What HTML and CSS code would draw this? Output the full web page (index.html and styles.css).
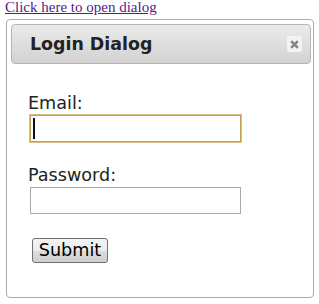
FILE: index.html
```html
<!DOCTYPE html>
<html>
<head>
<meta charset="utf-8">
<link rel="stylesheet" href="styles.css">
</head>
<body>
<a class="open-link" href="#">Click here to open dialog</a>
<div class="dialog">
  <div class="titlebar">
    <span class="title">Login Dialog</span>
    <span class="close">
      <svg width="9" height="9" viewBox="0 0 9 9"><path d="M1.2 1.2 L7.8 7.8 M7.8 1.2 L1.2 7.8" stroke="#858585" stroke-width="2.6" stroke-linecap="butt"/></svg>
    </span>
  </div>
  <form class="content">
    <label class="label">Email:</label>
    <span class="field focused"><input class="input email" type="text"></span>
    <label class="label pw">Password:</label>
    <span class="field"><input class="input" type="password"></span>
    <button class="submit" type="button">Submit</button>
  </form>
</div>
</body>
</html>
```
FILE: styles.css
```css
html, body {
  margin: 0;
  padding: 0;
  background: #fff;
}
body {
  width: 319px;
  height: 304px;
  overflow: hidden;
}
.open-link {
  display: block;
  margin: 0 0 0 5px;
  font-family: "Liberation Serif", serif;
  font-size: 15px;
  line-height: 14px;
  height: 14px;
  color: #551a8b;
  text-decoration: underline;
  width: max-content;
}
.dialog {
  box-sizing: border-box;
  margin: 5px 0 0 6px;
  width: 308px;
  height: 279px;
  border: 1px solid #ababab;
  border-radius: 4px;
  padding: 4px 2px 4px 4px;
  font-family: "DejaVu Sans", Verdana, sans-serif;
  font-size: 17.6px;
  color: #222;
  background: #fff;
}
.titlebar {
  box-sizing: border-box;
  width: 300px;
  height: 40px;
  border: 1px solid #b4b4b4;
  border-radius: 4px;
  background: linear-gradient(#ebebeb, #d2d2d2);
  display: flex;
  align-items: center;
  justify-content: space-between;
  padding: 0 8px 0 18px;
}
.title {
  font-weight: bold;
  font-size: 17.4px;
  line-height: 20px;
  color: #222;
}
.close {
  width: 15px;
  height: 16px;
  border-radius: 2px;
  background: #f3f3f3;
  display: flex;
  align-items: center;
  justify-content: center;
}
.content {
  display: flex;
  flex-direction: column;
  align-items: flex-start;
  padding: 29px 0 0 17px;
  margin: 0;
}
.label {
  display: block;
  line-height: 20px;
  height: 20px;
  color: #222;
}
.pw {
  margin-top: 23px;
}
.field {
  display: block;
  position: relative;
  margin: 2px 0 0 2px;
  height: 27px;
}
.input {
  box-sizing: border-box;
  display: block;
  width: 211px;
  height: 27px;
  margin: 0;
  border: 1px solid #a9a9a9;
  background: #fff;
  padding: 0 4px;
  font: inherit;
  outline: none;
}
.email {
  border-color: #c39f50;
  outline: 1px solid #dcbf80;
}
.focused::after {
  content: "";
  position: absolute;
  left: 3px;
  top: 3px;
  width: 2px;
  height: 21px;
  background: #111;
}
.submit {
  box-sizing: border-box;
  margin: 24px 0 0 4px;
  width: 76px;
  height: 25px;
  padding: 0;
  border: 1px solid #707070;
  border-radius: 3px;
  background: linear-gradient(#f4f4f4 0%, #ebebeb 50%, #dddddd 51%, #cfcfcf 100%);
  font-family: "DejaVu Sans", Verdana, sans-serif;
  font-size: 17.6px;
  line-height: 21px;
  color: #000;
}
```
